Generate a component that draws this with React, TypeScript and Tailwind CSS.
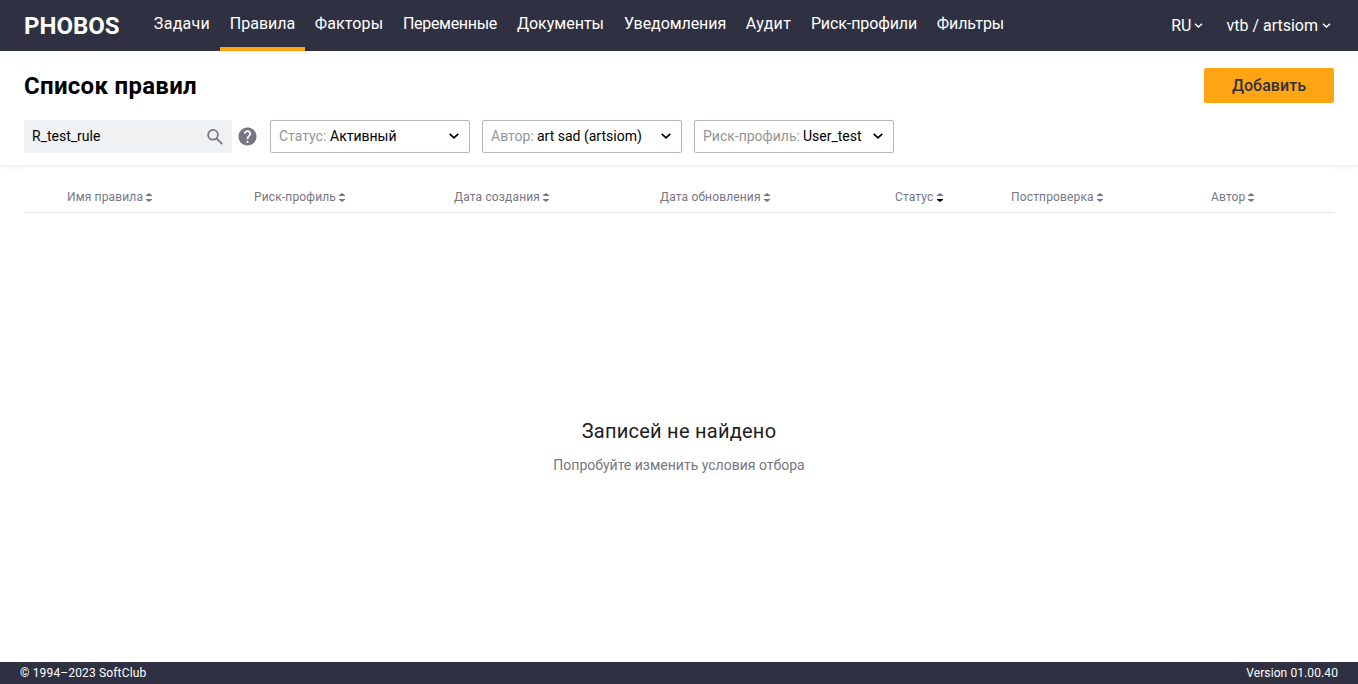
import React from "react";

const navItems = [
  { label: "Задачи", width: "w-[76px]", tracking: "tracking-[0.3px]" },
  { label: "Правила", width: "w-[85px]", tracking: "tracking-normal", active: true },
  { label: "Факторы", width: "w-[88px]", tracking: "tracking-[0.15px]" },
  { label: "Переменные", width: "w-[114px]", tracking: "tracking-[-0.3px]" },
  { label: "Документы", width: "w-[107px]", tracking: "tracking-normal" },
  { label: "Уведомления", width: "w-[122px]", tracking: "tracking-[-0.08px]" },
  { label: "Аудит", width: "w-[65px]", tracking: "tracking-[0.3px]" },
  { label: "Риск-профили", width: "w-[126px]", tracking: "tracking-[-0.1px]" },
  { label: "Фильтры", width: "w-[87px]", tracking: "tracking-[-0.1px]" },
];

const filters = [
  { label: "Статус:", value: "Активный", labelWidth: "w-[51px]" },
  { label: "Автор:", value: "art sad (artsiom)", labelWidth: "w-[46px]" },
  { label: "Риск-профиль:", value: "User_test", labelWidth: "w-[100px]" },
];

const columns = [
  { label: "Имя правила", width: "w-[187px]" },
  { label: "Риск-профиль", width: "w-[200px]" },
  { label: "Дата создания", width: "w-[206px]" },
  { label: "Дата обновления", width: "w-[235px]" },
  { label: "Статус", width: "w-[116px]", sorted: true },
  { label: "Постпроверка", width: "w-[200px]" },
  { label: "Автор", width: "w-[100px]" },
];

function Chevron({ className }: { className: string }) {
  return (
    <svg className={className} viewBox="0 0 10 6" fill="none" stroke="currentColor" strokeWidth="1.7">
      <path d="M0.7 0.8 L5 4.8 L9.3 0.8" />
    </svg>
  );
}

function SortIcon({ sorted }: { sorted?: boolean }) {
  return (
    <svg className="h-[9px] w-[6px] shrink-0" viewBox="0 0 6 9">
      <path d="M0 3 V2.3 L3 0 L6 2.3 V3 Z" fill="#777684" />
      <path d="M0 6 V6.7 L3 9 L6 6.7 V6 Z" fill={sorted ? "#000000" : "#777684"} />
    </svg>
  );
}

export default function App() {
  return (
    <div className="flex h-[684px] w-full flex-col bg-white font-['Roboto',sans-serif] text-black">
      <header className="flex h-[51px] shrink-0 bg-[#2f3142] pl-6 pr-[27px] text-white">
        <div className="w-[120px] whitespace-nowrap pt-[10px] text-[24px] font-bold leading-8">PHOBOS</div>
        <nav className="flex">
          {navItems.map((item) => (
            <a
              key={item.label}
              className={`${item.width} ${item.tracking} flex justify-center whitespace-nowrap border-b-4 pt-3 text-[16px] leading-6 ${
                item.active ? "border-[#ffa412]" : "border-transparent"
              }`}
            >
              {item.label}
            </a>
          ))}
        </nav>
        <div className="ml-auto flex items-center whitespace-nowrap text-[16px]">
          <span>RU</span>
          <Chevron className="ml-[3px] h-[5px] w-[9px]" />
          <span className="ml-[23px]">vtb / artsiom</span>
          <Chevron className="ml-[4px] h-[5px] w-[9px]" />
        </div>
      </header>

      <section className="h-[114px] shrink-0 px-6 shadow-[0_2px_4px_rgba(0,0,0,0.07)]">
        <div className="flex justify-between pt-[17px]">
          <h1 className="text-[24px] font-bold leading-9 tracking-[0.3px]">Список правил</h1>
          <button className="h-[35px] w-[130px] rounded-[2px] bg-[#ffa412] text-[16px] font-medium tracking-[0.05px] text-[#2f3142]">
            Добавить
          </button>
        </div>
        <div className="mt-4 flex h-[33px] items-center">
          <div className="flex h-full w-[208px] items-center justify-between rounded-[2px] bg-[#f0f1f3] pl-2 pr-[9px] text-[14px]">
            <span>R_test_rule</span>
            <svg className="h-4 w-4" viewBox="0 0 16 16" fill="none" stroke="#777684" strokeWidth="1.8">
              <circle cx="6" cy="5.8" r="4.9" />
              <path d="M9.5 9.4 L15.2 15.2" />
            </svg>
          </div>
          <svg className="ml-[6px] h-[19px] w-[19px]" viewBox="1.5 1.5 21 21" fill="#777684">
            <path d="M12 2C6.48 2 2 6.48 2 12s4.48 10 10 10 10-4.48 10-10S17.52 2 12 2zm1 17h-2v-2h2v2zm2.07-7.75-.9.92C13.45 12.9 13 13.5 13 15h-2v-.5c0-1.1.45-2.1 1.17-2.83l1.24-1.26c.37-.36.59-.86.59-1.41 0-1.1-.9-2-2-2s-2 .9-2 2H8c0-2.21 1.79-4 4-4s4 1.79 4 4c0 .88-.36 1.68-.93 2.25z" />
          </svg>
          <div className="ml-[13px] flex h-full gap-3">
            {filters.map((filter) => (
              <div
                key={filter.label}
                className="flex w-[200px] items-center whitespace-nowrap rounded-[2px] border border-[#b3b6c3] pl-2 pr-[10px] text-[14px]"
              >
                <span className={`${filter.labelWidth} text-[#959595]`}>{filter.label}</span>
                <span>{filter.value}</span>
                <Chevron className="mb-px ml-auto h-[6px] w-[10px]" />
              </div>
            ))}
          </div>
        </div>
      </section>

      <main className="z-10 mx-6 mt-[2px] flex grow flex-col bg-white">
        <div className="flex h-[46px] shrink-0 items-start border-b border-[#e3e3ea] pl-[43px] pt-[21px] text-[12px] leading-[18px] text-[#777684]">
          {columns.map((column) => (
            <div key={column.label} className={`${column.width} flex shrink-0 items-center gap-[3px] whitespace-nowrap tracking-[0.15px]`}>
              {column.label}
              <SortIcon sorted={column.sorted} />
            </div>
          ))}
        </div>
        <div className="pt-[204px] text-center">
          <p className="text-[20px] leading-7 tracking-[0.25px] text-[#1d1d1f]">Записей не найдено</p>
          <p className="mt-[10px] text-[14px] leading-5 text-[#777684]">Попробуйте изменить условия отбора</p>
        </div>
      </main>

      <footer className="flex h-[22px] shrink-0 items-center justify-between bg-[#2f3142] px-5 text-[12px] text-white">
        <span className="tracking-[0.15px]">© 1994–2023 SoftClub</span>
        <span className="tracking-[0.1px]">Version 01.00.40</span>
      </footer>
    </div>
  );
}
